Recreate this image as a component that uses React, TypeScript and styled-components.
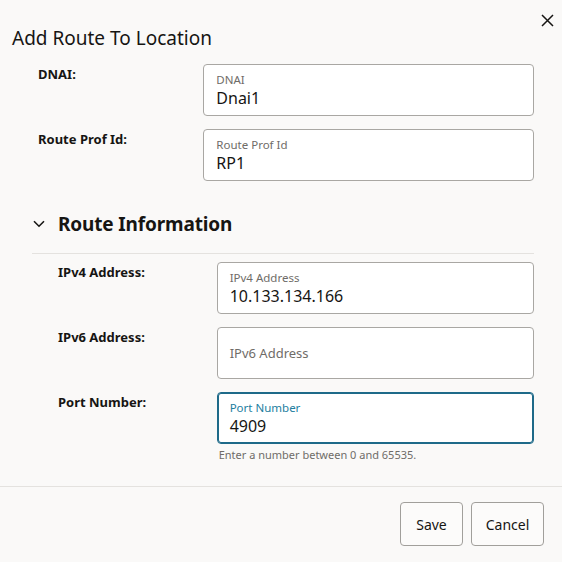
import React from "react";
import styled, { createGlobalStyle } from "styled-components";

const Global = createGlobalStyle`
  html, body { margin: 0; padding: 0; background: #faf9f8; }
  body { font-family: "Noto Sans", "Open Sans", sans-serif; color: #161513; }
  * { box-sizing: border-box; }
`;

const Dialog = styled.div`
  width: 562px;
  height: 562px;
  display: flex;
  flex-direction: column;
  background: #faf9f8;
`;

const Header = styled.div`
  display: flex;
  justify-content: space-between;
  align-items: flex-start;
  padding: 8px 3px 0 12px;
`;

const Title = styled.h1`
  margin: 18px 0 0 0;
  font-size: 19px;
  line-height: 24px;
  font-weight: 400;
  color: #161513;
`;

const CloseButton = styled.button`
  width: 24px;
  height: 24px;
  border: none;
  background: transparent;
  padding: 0;
  display: flex;
  align-items: center;
  justify-content: center;
  color: #161513;
  cursor: pointer;
`;

const Body = styled.div`
  flex: 1;
  padding: 14px 28px 0 32px;
`;

const FieldGroup = styled.div<{ $indent: number; $pad?: number }>`
  display: flex;
  flex-direction: column;
  gap: 13px;
  padding-left: ${(p) => p.$indent}px;
  padding-top: ${(p) => p.$pad ?? 0}px;
`;

const Row = styled.div`
  display: grid;
  grid-template-columns: 1fr 2fr;
  align-items: start;
`;

const RowLabel = styled.div`
  font-size: 13px;
  line-height: 20px;
  font-weight: 700;
  color: #161513;
`;

const FieldCol = styled.div`
  display: flex;
  flex-direction: column;
`;

const Box = styled.div<{ $focused?: boolean; $empty?: boolean }>`
  height: 52px;
  background: #ffffff;
  border: 1px solid ${(p) => (p.$focused ? "#1e6a89" : "#a9a7a3")};
  box-shadow: ${(p) => (p.$focused ? "inset 0 0 0 1px #1e6a89" : "none")};
  border-radius: 4px;
  padding: ${(p) => (p.$empty ? "0 12px" : "7px 12px 7px 12px")};
  display: flex;
  flex-direction: column;
  justify-content: ${(p) => (p.$empty ? "center" : "flex-start")};
`;

const InnerLabel = styled.div<{ $focused?: boolean }>`
  font-size: 11.5px;
  line-height: 16px;
  color: ${(p) => (p.$focused ? "#227ea0" : "#6f6c68")};
`;

const Value = styled.div`
  font-size: 16px;
  line-height: 20px;
  color: #161513;
`;

const Placeholder = styled.div`
  font-size: 13px;
  line-height: 18px;
  color: #6f6c68;
`;

const Help = styled.div`
  margin-top: 3px;
  padding-left: 2px;
  font-size: 11px;
  line-height: 16px;
  color: #6f6c68;
`;

const SectionHeader = styled.div`
  margin-top: 29px;
  display: flex;
  align-items: center;
  gap: 13px;
  padding: 0 0 15px 1px;
  border-bottom: 1px solid #e4e2df;
`;

const SectionTitle = styled.h2`
  margin: 0;
  font-size: 19px;
  letter-spacing: -0.15px;
  line-height: 28px;
  font-weight: 700;
  color: #161513;
`;

const Footer = styled.div`
  border-top: 1px solid #e4e2df;
  padding: 15px 18px 16px 18px;
  display: flex;
  justify-content: flex-end;
  gap: 8px;
`;

const Button = styled.button<{ $w: number }>`
  width: ${(p) => p.$w}px;
  height: 44px;
  border: 1px solid #a19f9b;
  border-radius: 4px;
  background: #fcfbfa;
  font-family: "Noto Sans", "Open Sans", sans-serif;
  font-size: 14px;
  color: #161513;
  padding: 0;
`;

type FieldProps = {
  label: string;
  value?: string;
  focused?: boolean;
  help?: string;
};

function Field({ label, value, focused, help }: FieldProps) {
  return (
    <Row>
      <RowLabel>{label}:</RowLabel>
      <FieldCol>
        {value ? (
          <Box $focused={focused}>
            <InnerLabel $focused={focused}>{label}</InnerLabel>
            <Value>{value}</Value>
          </Box>
        ) : (
          <Box $empty>
            <Placeholder>{label}</Placeholder>
          </Box>
        )}
        {help && <Help>{help}</Help>}
      </FieldCol>
    </Row>
  );
}

export default function App() {
  return (
    <>
      <Global />
      <Dialog>
        <Header>
          <Title>Add Route To Location</Title>
          <CloseButton aria-label="Close">
            <svg width="13" height="13" viewBox="0 0 13 13">
              <path d="M1 1 L12 12 M12 1 L1 12" stroke="#161513" strokeWidth="1.5" fill="none" />
            </svg>
          </CloseButton>
        </Header>
        <Body>
          <FieldGroup $indent={6}>
            <Field label="DNAI" value="Dnai1" />
            <Field label="Route Prof Id" value="RP1" />
          </FieldGroup>
          <SectionHeader>
            <svg width="12" height="8" viewBox="0 0 12 8">
              <path d="M1 1.2 L6 6.2 L11 1.2" stroke="#161513" strokeWidth="1.6" fill="none" />
            </svg>
            <SectionTitle>Route Information</SectionTitle>
          </SectionHeader>
          <FieldGroup $indent={26} $pad={8}>
            <Field label="IPv4 Address" value="10.133.134.166" />
            <Field label="IPv6 Address" />
            <Field label="Port Number" value="4909" focused help="Enter a number between 0 and 65535." />
          </FieldGroup>
        </Body>
        <Footer>
          <Button $w={63}>Save</Button>
          <Button $w={73}>Cancel</Button>
        </Footer>
      </Dialog>
    </>
  );
}
